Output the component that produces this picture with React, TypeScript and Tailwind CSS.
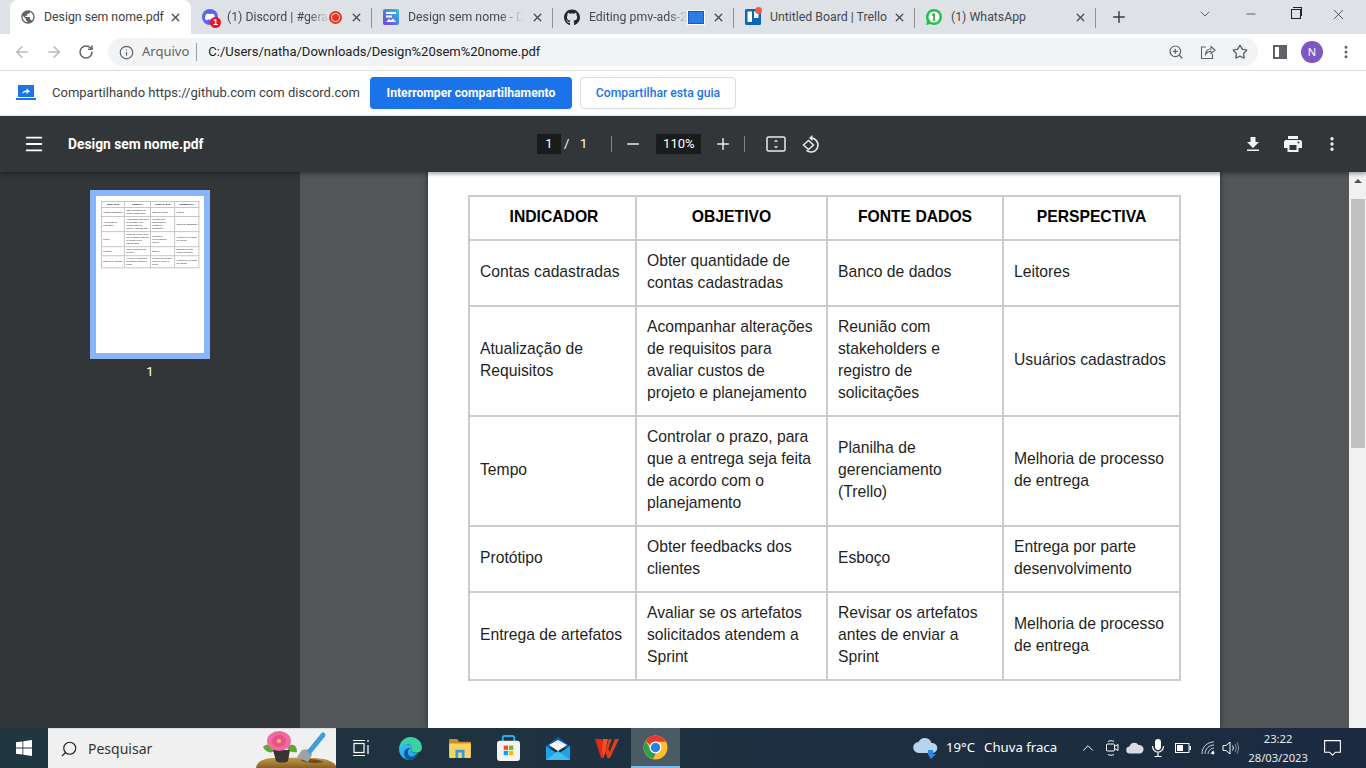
import { ArrowLeft, ArrowRight, RotateCw, Info, ZoomIn, Star, EllipsisVertical, X, Plus, ChevronDown, Minus, Menu, ChevronUp, Search } from "lucide-react"
import { FaGithub } from "react-icons/fa"
import type { ReactNode } from "react"

const GlobeIcon = () => (
  <svg width="18" height="18" viewBox="0 0 24 24" fill="#5f6368">
    <path d="M12 2C6.48 2 2 6.48 2 12s4.48 10 10 10 10-4.48 10-10S17.52 2 12 2zm-1 17.93c-3.95-.49-7-3.85-7-7.93 0-.62.08-1.21.21-1.79L9 15v1c0 1.1.9 2 2 2v1.93zm6.9-2.54c-.26-.81-1-1.39-1.9-1.39h-1v-3c0-.55-.45-1-1-1H8v-2h2c.55 0 1-.45 1-1V7h2c1.1 0 2-.9 2-2v-.41c2.93 1.19 5 4.06 5 7.41 0 2.08-.8 3.97-2.1 5.39z" />
  </svg>
)

const DiscordIcon = () => (
  <span className="relative block w-4 h-4">
    <svg width="16" height="16" viewBox="0 0 16 16">
      <circle cx="8" cy="8" r="8" fill="#5865f2" />
      <path d="M4 5.2c1-.6 2-.8 2.4-.8l.3.5h2.6l.3-.5c.4 0 1.400.2 2.400.8.800 1.700 1 3.400.9 5-1 .7-1.800 1-2.400 1l-.5-.8H6l-.5.800c-.6 0-1.400-.3-2.400-1-.1-1.600.100-3.300.900-5z" fill="#fff" />
    </svg>
    <span className="absolute -right-[3px] -bottom-[3px] w-[11px] h-[11px] rounded-full bg-[#e8132b] text-white text-[9px] leading-[11px] font-bold text-center font-['Liberation_Sans',sans-serif]">1</span>
  </span>
)

const CanvaIcon = () => (
  <svg width="16" height="16" viewBox="0 0 16 16">
    <defs>
      <linearGradient id="cv" x1="1" y1="0" x2="0" y2="1">
        <stop offset="0" stopColor="#25c3e8" />
        <stop offset="1" stopColor="#7a3fe0" />
      </linearGradient>
    </defs>
    <rect width="16" height="16" rx="2" fill="url(#cv)" />
    <rect x="3" y="3" width="10" height="2" fill="#fff" />
    <rect x="3" y="6.500" width="6" height="2" fill="#fff" />
    <path d="M3 13l3-3 2 1.500 2-2 3 3.500z" fill="#fff" />
  </svg>
)

const TrelloIcon = () => (
  <span className="relative block w-4 h-4">
    <svg width="16" height="16" viewBox="0 0 16 16">
      <rect width="16" height="16" rx="1.500" fill="#0c66b4" />
      <rect x="2.500" y="2.500" width="4.500" height="10.500" fill="#fff" />
      <rect x="9" y="2.500" width="4.500" height="6.500" fill="#fff" />
    </svg>
    <span className="absolute -right-[1px] -top-[2px] w-[7px] h-[7px] rounded-full bg-[#f05a47]" />
  </span>
)

const WhatsAppIcon = () => (
  <svg width="16" height="16" viewBox="0 0 16 16">
    <path d="M8 0a8 8 0 0 1 0 16c-1.400 0-2.600-.3-3.700-.9L0 16l1-4A8 8 0 0 1 8 0z" fill="#25c24a" />
    <circle cx="8" cy="8" r="5.500" fill="#fff" />
    <path d="M8.800 4.200V12H7.200V6.200L5.900 7V5.600l1.700-1.400z" fill="#19a53c" />
  </svg>
)

const Tab = ({ icon, title, active, fade, extra }: { icon: ReactNode; title: string; active?: boolean; fade?: boolean; extra?: ReactNode }) => (
  <div className={`relative w-[181px] h-[34px] flex items-center pr-[9px] shrink-0 ${active ? "bg-white rounded-t-lg pl-[10px]" : "pl-[11px] after:absolute after:right-0 after:top-[8px] after:h-[20px] after:w-px after:bg-[#8d9095]"}`}>
    <span className="w-4 h-4 shrink-0 flex items-center justify-center">{icon}</span>
    <span className={`flex-1 min-w-0 whitespace-nowrap text-[12.3px] font-['Roboto',sans-serif] ${active ? "ml-2 text-[#3c4043]" : "ml-[9px] text-[#45484c]"} ${fade ? "overflow-hidden [mask-image:linear-gradient(to_right,black_80%,transparent)]" : ""}`}>{title}</span>
    {extra}
    <X size={13} strokeWidth={2.4} className="ml-2 shrink-0 text-[#45484c]" />
  </div>
)

type Row = [string, string, string, string]

const rows: Row[] = [
  ["Contas cadastradas", "Obter quantidade de\ncontas cadastradas", "Banco de dados", "Leitores"],
  ["Atualização de\nRequisitos", "Acompanhar alterações\nde requisitos para\navaliar custos de\nprojeto e planejamento", "Reunião com\nstakeholders e\nregistro de\nsolicitações", "Usuários cadastrados"],
  ["Tempo", "Controlar o prazo, para\nque a entrega seja feita\nde acordo com o\nplanejamento", "Planilha de\ngerenciamento\n(Trello)", "Melhoria de processo\nde entrega"],
  ["Protótipo", "Obter feedbacks dos\nclientes", "Esboço", "Entrega por parte\ndesenvolvimento"],
  ["Entrega de artefatos", "Avaliar se os artefatos\nsolicitados atendem a\nSprint", "Revisar os artefatos\nantes de enviar a\nSprint", "Melhoria de processo\nde entrega"],
]
const rowHeights = ["h-[66px]", "h-[110px]", "h-[110px]", "h-[66px]", "h-[88px]"]
const heads = ["INDICADOR", "OBJETIVO", "FONTE DADOS", "PERSPECTIVA"]

// same table is used for the page and for the sidebar thumbnail
const DocTable = ({ thumb }: { thumb?: boolean }) => {
  const cellBorder = thumb ? "border-[7px] border-[#c4c4c4]" : "border-2 border-[#cccccc]"
  return (
    <table className="table-fixed border-collapse w-[711px] font-['Liberation_Sans',sans-serif] text-[15.7px] leading-[22px] text-[#1f1f1f]">
      <colgroup>
        <col className="w-[167px]" />
        <col className="w-[191px]" />
        <col className="w-[176px]" />
        <col className="w-[177px]" />
      </colgroup>
      <thead>
        <tr className="h-[44px]">
          {heads.map((h) => (
            <th key={h} className={`${cellBorder} pb-[3px] first:pl-[3px] text-center font-bold text-black`}>{h}</th>
          ))}
        </tr>
      </thead>
      <tbody>
        {rows.map((r, i) => (
          <tr key={r[0]} className={rowHeights[i]}>
            {r.map((c, j) => (
              <td key={j} className={`${cellBorder} pl-[10px] pb-[3px] align-middle whitespace-pre-line`}>{c}</td>
            ))}
          </tr>
        ))}
      </tbody>
    </table>
  )
}

const ChromeIcon = () => (
  <svg width="25" height="25" viewBox="0 0 48 48">
    <circle cx="24" cy="24" r="23" fill="#fbc02d" />
    <path d="M24 1a23 23 0 0 1 20 12H24a11 11 0 0 0-10 6.500L5 11A23 23 0 0 1 24 1z" fill="#e53935" />
    <path d="M5 11 14 27a11 11 0 0 0 11 8l-6 11A23 23 0 0 1 5 11z" fill="#2e9e4f" />
    <circle cx="24" cy="24" r="11.500" fill="#fff" />
    <circle cx="24" cy="24" r="9" fill="#2f7de1" />
  </svg>
)

const EdgeIcon = () => (
  <svg width="25" height="25" viewBox="0 0 48 48">
    <defs>
      <linearGradient id="eg" x1="0" y1="1" x2="1" y2="0">
        <stop offset="0" stopColor="#0c59a4" />
        <stop offset="1" stopColor="#114a8b" />
      </linearGradient>
      <linearGradient id="eg2" x1="0" y1="0" x2="1" y2="1">
        <stop offset="0" stopColor="#35c1f1" />
        <stop offset="1" stopColor="#1b9de2" />
      </linearGradient>
    </defs>
    <path d="M24 2C36 2 46 10 46 23c0 6-5 9-11 9-5 0-9-2-9-5 0-1 1-2 1-4 0-5-5-8-10-7C9 17 3 23 2 26 2 13 11 2 24 2z" fill="#39d2a0" />
    <path d="M2 26C4 17 11 14 17 16c5 0 10 2 10 7 0 2-1 3-1 4 0 4 6 7 12 5-2 8-9 14-16 14C11 46 2 37 2 26z" fill="url(#eg2)" />
    <path d="M22 46c-8-2-11-9-10-15 1-5 6-9 12-8-5 2-6 8-4 13 2 4 8 7 18-4-2 8-9 14-16 14z" fill="url(#eg)" />
  </svg>
)

const FolderIcon = () => (
  <svg width="22" height="20" viewBox="0 0 24 22">
    <path d="M0 2a1 1 0 0 1 1-1h8l2 3h12a1 1 0 0 1 1 1v3H0z" fill="#c98f1a" />
    <path d="M0 6h24v15a1 1 0 0 1-1 1H1a1 1 0 0 1-1-1z" fill="#fcd462" />
    <path d="M7 13h10v9h-3v-6h-4v6H7z" fill="#2f9ee0" />
  </svg>
)

const StoreIcon = () => (
  <svg width="23" height="26" viewBox="0 0 24 27">
    <path d="M6 8V3a2 2 0 0 1 2-2h8a2 2 0 0 1 2 2v5" stroke="#22b2e8" strokeWidth="2" fill="none" />
    <rect x="0" y="6" width="24" height="21" rx="3" fill="#f4f4f4" />
    <rect x="7" y="11" width="4.500" height="4.500" fill="#f25022" />
    <rect x="12.500" y="11" width="4.500" height="4.500" fill="#7fba00" />
    <rect x="7" y="16.500" width="4.500" height="4.500" fill="#00a4ef" />
    <rect x="12.500" y="16.500" width="4.500" height="4.500" fill="#ffb900" />
  </svg>
)

const MailIcon = () => (
  <svg width="24" height="23" viewBox="0 0 24 23">
    <path d="M0 9 12 0l12 9v2H0z" fill="#0a5cab" />
    <path d="M3 8l9-5 9 5-9 6z" fill="#f4f8fb" />
    <path d="M0 9l12 8 12-8v14H0z" fill="#1fa3e8" />
    <path d="M0 23l12-9 12 9z" fill="#45bdf0" />
  </svg>
)

const WpsIcon = () => (
  <svg width="24" height="20" viewBox="0 0 24 20">
    <path d="M0 1h7l4 11-2.500 8H6z" fill="#e0281d" />
    <path d="M8 1h5L8.500 20 7 12z" fill="#f4511e" />
    <path d="M14 1h10L15 20h-2.500L10 13z" fill="#e63b1f" />
    <path d="M16.500 1H20l-5.500 13-1-3z" fill="#1f3340" />
  </svg>
)

const Flower = () => (
  <svg width="80" height="39" viewBox="0 0 80 39">
    <defs>
      <linearGradient id="soil" x1="0" y1="0" x2="0" y2="1">
        <stop offset="0" stopColor="#c29a4e" />
        <stop offset="1" stopColor="#8a5f22" />
      </linearGradient>
    </defs>
    <path d="M0 39c1-7 8-10 20-10 20 0 24-1 36 0 12 0 22 3 24 8v2z" fill="url(#soil)" />
    <path d="M44 31c8-2 18-1 24 2-8 2-18 1-24-2z" fill="#6e4a1c" />
    <path d="M7 18c4-4 10-3 12 3-3 4-9 3-12-3zM34 16c5-1 7 2 7 7-4 1-8 0-10-4z" fill="#5fa838" />
    <path d="M17 21h17l-2 11c-2 2-10 2-12 0z" fill="#3a3436" />
    <ellipse cx="23" cy="12" rx="12" ry="10" fill="#f06aa0" />
    <ellipse cx="23" cy="12" rx="7" ry="6" fill="#ec4f8e" />
    <circle cx="23" cy="12" r="2" fill="#f4c542" />
    <path d="M41 28l5-7 8-1 2 6-4 7z" fill="#9ba3aa" />
    <path d="M54 22l13-16" stroke="#3f9ed8" strokeWidth="5" strokeLinecap="round" />
  </svg>
)

const TaskSlot = ({ children, active }: { children: ReactNode; active?: boolean }) => (
  <div className={`w-[49px] h-[40px] flex items-center justify-center shrink-0 ${active ? "bg-[#4a5b65] border-b-2 border-[#76b9ed]" : ""}`}>{children}</div>
)

export default function App() {
  return (
    <div className="w-[1366px] h-[768px] overflow-hidden flex flex-col bg-white font-['Noto_Sans',sans-serif]">
      {/* tab strip */}
      <div className="h-[34px] bg-[#dee1e6] flex items-center pl-[10px] shrink-0">
        <Tab active icon={<GlobeIcon />} title="Design sem nome.pdf" />
        <Tab fade icon={<DiscordIcon />} title="(1) Discord | #gera" extra={
          <span className="w-[13px] h-[13px] rounded-full border-2 border-[#e8332b] flex items-center justify-center shrink-0">
            <span className="w-[7px] h-[7px] rounded-full bg-[#e8332b]" />
          </span>
        } />
        <Tab fade icon={<CanvaIcon />} title="Design sem nome - D" />
        <Tab fade icon={<FaGithub size={17} color="#24292e" />} title="Editing pmv-ads-2" extra={
          <span className="w-[16px] h-[13px] border border-[#1a56c4] bg-[#2a7de1] outline outline-white shrink-0" />
        } />
        <Tab icon={<TrelloIcon />} title="Untitled Board | Trello" />
        <Tab icon={<WhatsAppIcon />} title="(1) WhatsApp" />
        <Plus size={18} strokeWidth={2} className="ml-[14px] text-[#3c4043]" />
        <ChevronDown size={16} strokeWidth={1.2} className="ml-[69px] mb-[6px] text-[#3c4043]" />
        <Minus size={14} strokeWidth={1.2} className="ml-[31px] mb-[6px] text-[#222]" />
        <span className="ml-[33px] mb-[6px] relative w-[10px] h-[10px] border border-[#222] bg-[#dee1e6] before:absolute before:-top-[3px] before:left-[1px] before:w-[9px] before:h-[9px] before:border-t before:border-r before:border-[#222]" />
        <X size={17} strokeWidth={1} className="ml-[29px] mb-[6px] text-[#222]" />
      </div>

      {/* omnibox toolbar */}
      <div className="h-[37px] flex items-center shrink-0 border-b border-[#dadce0] text-[#5f6368]">
        <ArrowLeft size={18} strokeWidth={2} className="ml-[13px] text-[#b6b9bd]" />
        <ArrowRight size={18} strokeWidth={2} className="ml-[14px] text-[#b6b9bd]" />
        <RotateCw size={16} strokeWidth={2.200} className="ml-[15px]" />
        <div className="ml-[14px] w-[1150px] h-[28px] rounded-full bg-[#f1f3f4] flex items-center pl-[11px] pr-[10px]">
          <Info size={15} strokeWidth={2} />
          <span className="ml-[8px] text-[13px] text-[#5f6368]">Arquivo</span>
          <span className="ml-[7px] w-px h-[18px] bg-[#9aa0a6]" />
          <span className="ml-[11px] text-[13px] text-[#202124] font-['Roboto',sans-serif]">C:/Users/natha/Downloads/Design%20sem%20nome.pdf</span>
          <ZoomIn size={16} strokeWidth={1.800} className="ml-auto mr-[16px]" />
          <svg width="16" height="16" viewBox="0 0 16 16" fill="none" stroke="#5f6368" strokeWidth="1.100" className="mr-[16px]">
            <path d="M6 3H1.500v11.500h11V10" />
            <path d="M5.500 10.500c.3-3.500 2.700-5.500 5.500-5.500V2.500L15 6l-4 3.500V7.300c-2.500 0-4 1-5.500 3.200z" />
          </svg>
          <Star size={16} strokeWidth={2} />
        </div>
        <span className="ml-[15px] w-[14px] h-[14px] border-2 border-[#5f6368] flex justify-end">
          <span className="w-[6px] h-full bg-[#5f6368]" />
        </span>
        <span className="ml-[14px] w-[22px] h-[22px] rounded-full bg-[#7e57c2] text-white text-[11px] flex items-center justify-center">N</span>
        <EllipsisVertical size={16} strokeWidth={2.500} className="ml-[15px]" />
      </div>

      {/* sharing infobar */}
      <div className="h-[45px] flex items-center shrink-0 border-b border-[#f0f0f0] font-['Roboto',sans-serif]">
        <svg width="20" height="16" viewBox="0 0 20 16" className="ml-[16px]">
          <rect x="2" y="0" width="16" height="12" fill="#1a73e8" />
          <rect x="0" y="13" width="20" height="2" fill="#1a73e8" />
          <path d="M6 9c.5-2.500 2-3.500 4.500-3.500V3.500L14 6.200 10.500 9V7C8.500 7 7 7.700 6 9z" fill="#fff" />
        </svg>
        <span className="ml-[16px] w-[318px] whitespace-nowrap text-[13px] text-[#3c4043]">Compartilhando https://github.com com discord.com</span>
        <button className="w-[202px] h-[32px] rounded bg-[#1a73e8] text-white text-[12.2px] font-bold">Interromper compartilhamento</button>
        <button className="ml-[8px] w-[156px] h-[32px] rounded border border-[#dadce0] bg-white text-[#1a73e8] text-[12.2px] font-medium">Compartilhar esta guia</button>
      </div>

      {/* pdf toolbar */}
      <div className="relative z-10 h-[56px] bg-[#323639] flex items-center text-white shrink-0 shadow-[0_2px_4px_rgba(0,0,0,0.35)] font-['Roboto',sans-serif]">
        <Menu size={22} strokeWidth={2} className="ml-[23px]" />
        <span className="ml-[23px] w-[469px] text-[13.8px] font-bold">Design sem nome.pdf</span>
        <span className="w-[24px] h-[20px] bg-[#191b1c] text-[13px] flex items-center justify-center">1</span>
        <span className="ml-[3px] text-[13px] w-[8px]">/</span>
        <span className="ml-[8px] text-[13px]">1</span>
        <span className="ml-[24px] w-px h-[16px] bg-[#80868b]" />
        <Minus size={18} strokeWidth={2} className="ml-[12px] text-[#e8eaed]" />
        <span className="ml-[14px] w-[45px] h-[20px] bg-[#191b1c] text-[13px] flex items-center justify-center">110%</span>
        <Plus size={18} strokeWidth={2} className="ml-[13px] text-[#e8eaed]" />
        <span className="ml-[12px] w-px h-[16px] bg-[#80868b]" />
        <svg width="20" height="16" viewBox="0 0 20 16" fill="none" className="ml-[21px]">
          <rect x="1" y="1" width="18" height="14" rx="1.500" stroke="#e8eaed" strokeWidth="1.500" />
          <path d="M10 3.500l2 2.200H8zM10 12.500l-2-2.200h4z" fill="#e8eaed" />
        </svg>
        <svg width="20" height="20" viewBox="0 0 20 20" fill="none" className="ml-[15px]">
          <path d="M10 4a7 7 0 1 1-4.500 12.400" stroke="#e8eaed" strokeWidth="1.500" />
          <path d="M11.500 1v6L8 4z" fill="#e8eaed" />
          <path d="M7.500 6.500 2.500 11l5 4.500 5-4.500z" stroke="#e8eaed" strokeWidth="1.500" />
        </svg>
        <svg width="16" height="16" viewBox="0 0 16 16" className="ml-[424px]" fill="#f1f3f4">
          <path d="M5.500 1h5v5H14l-6 6-6-6h3.500zM2 13.500h12V15H2z" />
        </svg>
        <svg width="18" height="16" viewBox="0 0 18 16" className="ml-[23px]" fill="#f1f3f4">
          <path d="M4 0h10v3H4zM2 4h14a2 2 0 0 1 2 2v6h-3.500v4h-11v-4H0V6a2 2 0 0 1 2-2zm3.500 5v5h7V9zM14.500 5.500a1 1 0 1 0 0 2 1 1 0 0 0 0-2z" fillRule="evenodd" />
        </svg>
        <EllipsisVertical size={18} strokeWidth={2.500} className="ml-[21px] text-[#f1f3f4]" />
      </div>

      {/* pdf body */}
      <div className="flex-1 min-h-0 flex overflow-hidden">
        <aside className="w-[300px] bg-[#323639] shrink-0 flex flex-col items-center pt-[18px] font-['Roboto',sans-serif]">
          <div className="w-[120px] h-[169px] border-[6px] border-[#8ab4f8] bg-white overflow-hidden p-[5px]">
            <div className="w-[711px] origin-top-left scale-[0.137]">
              <DocTable thumb />
            </div>
          </div>
          <span className="mt-[3px] text-white text-[13px]">1</span>
        </aside>
        <main className="flex-1 bg-[#525659] flex overflow-hidden">
          <div className="flex-1 pl-[128px]">
            <div className="w-[792px] h-full bg-white shadow-[0_0_6px_rgba(0,0,0,0.5)] pl-[40px] pt-[23px]">
              <DocTable />
            </div>
          </div>
          <div className="w-[17px] bg-[#f1f1f1] flex flex-col items-center shrink-0">
            <span className="mt-[7px] w-0 h-0 border-x-[4px] border-x-transparent border-b-[4px] border-b-[#505050]" />
            <span className="mt-[16px] w-[14px] h-[249px] bg-[#c1c1c1]" />
          </div>
        </main>
      </div>

      {/* windows taskbar */}
      <div className="h-[40px] shrink-0 flex items-center bg-gradient-to-r from-[#20373f] to-[#1b2a41] text-white">
        <div className="w-[48px] flex justify-center">
          <svg width="16" height="16" viewBox="0 0 16 16" fill="#fff">
            <path d="M0 2.300 6.500 1.400v6.200H0zM7.300 1.300 16 0v7.600H7.300zM0 8.400h6.500v6.200L0 13.700zM7.300 8.400H16V16l-8.700-1.300z" />
          </svg>
        </div>
        <div className="w-[288px] h-[40px] bg-[#f0f0f0] flex items-center pl-[12px] border-t border-[#dcdcdc] overflow-hidden">
          <Search size={18} strokeWidth={1.500} className="text-[#222] -scale-x-100" />
          <span className="ml-[10px] text-[14px] text-[#333]">Pesquisar</span>
          <span className="ml-auto self-end flex"><Flower /></span>
        </div>
        <div className="w-px shrink-0" />
        <TaskSlot>
          <svg width="17" height="18" viewBox="0 0 17 18" fill="none" stroke="#fff" strokeWidth="1.200">
            <rect x="1" y="4.500" width="10" height="9" />
            <path d="M0 1.500h12M0 16.500h12M15 1v2M15 6v9" />
          </svg>
        </TaskSlot>
        <TaskSlot><EdgeIcon /></TaskSlot>
        <TaskSlot><FolderIcon /></TaskSlot>
        <TaskSlot><StoreIcon /></TaskSlot>
        <TaskSlot><MailIcon /></TaskSlot>
        <TaskSlot><WpsIcon /></TaskSlot>
        <TaskSlot active><ChromeIcon /></TaskSlot>
        <svg width="26" height="22" viewBox="0 0 26 22" className="ml-[233px]">
          <path d="M6 16a5.500 5.500 0 0 1-.5-11A7 7 0 0 1 18.500 6 5 5 0 0 1 20 16z" fill="#b9d3ee" />
          <path d="M15 13h5v4h3l-5 5-1-1-2-4z" fill="#2f86e0" />
        </svg>
        <span className="ml-[7px] text-[13.2px]">19°C</span>
        <span className="ml-[9px] text-[13.2px]">Chuva fraca</span>
        <ChevronUp size={18} strokeWidth={1.300} className="ml-[22px]" />
        <svg width="14" height="18" viewBox="0 0 14 18" fill="none" stroke="#fff" strokeWidth="1" className="ml-[8px]">
          <rect x="1.500" y="5" width="8" height="7" rx="1" />
          <path d="M9.500 7.500 13 5.500v6l-3.500-2M3 2.500c2-1 4-1 6 0M3 15.500c2 1 4 1 6 0" />
        </svg>
        <svg width="18" height="12" viewBox="0 0 18 12" fill="#d8dde2" className="ml-[7px]">
          <path d="M4 11.500a3.500 3.500 0 0 1-.5-7A5 5 0 0 1 12.500 3 4.200 4.200 0 0 1 14 11.500z" />
        </svg>
        <svg width="14" height="20" viewBox="0 0 14 20" fill="none" className="ml-[7px]">
          <rect x="4" y="1" width="6" height="11" rx="3" fill="#fff" />
          <path d="M1.500 8c0 3.500 2.500 6 5.500 6s5.500-2.500 5.500-6M7 14v4M3.500 18.500h7" stroke="#fff" strokeWidth="1.200" />
        </svg>
        <svg width="16" height="10" viewBox="0 0 16 10" fill="none" className="ml-[10px]">
          <rect x="0.500" y="0.500" width="13.500" height="9" stroke="#fff" />
          <rect x="2" y="2" width="6" height="6" fill="#fff" />
          <rect x="14.500" y="3" width="1.500" height="4" fill="#fff" />
        </svg>
        <svg width="14" height="14" viewBox="0 0 14 14" fill="none" stroke="#cfd4d9" strokeWidth="1" className="ml-[10px]">
          <path d="M1 13C1 6 6 1 13 1M4 13c0-5 4-9 9-9M7 13c0-3 3-6 6-6M10 13c0-1.500 1.500-3 3-3" />
          <circle cx="12" cy="12" r="1.400" fill="#fff" stroke="none" />
        </svg>
        <svg width="17" height="14" viewBox="0 0 17 14" fill="none" stroke="#fff" strokeWidth="1" className="ml-[7px]">
          <path d="M1 4.500h3L8 1v12l-4-3.500H1zM10.500 4.500c1 1.500 1 3.500 0 5" />
          <path d="M13 3c1.500 2.500 1.500 5.500 0 8M15 1.500c2 3.500 2 7.500 0 11" stroke="#8b97a3" />
        </svg>
        <div className="ml-[6px] w-[66px] flex flex-col items-center text-[11.2px] leading-[19px] text-[#e8ebee] whitespace-nowrap">
          <span>23:22</span>
          <span>28/03/2023</span>
        </div>
        <svg width="17" height="16" viewBox="0 0 17 16" fill="none" stroke="#fff" strokeWidth="1.100" className="ml-[13px]">
          <path d="M.6.6h15.800v11.600h-5l-2.900 3-2.900-3h-5z" />
        </svg>
      </div>
    </div>
  )
}
